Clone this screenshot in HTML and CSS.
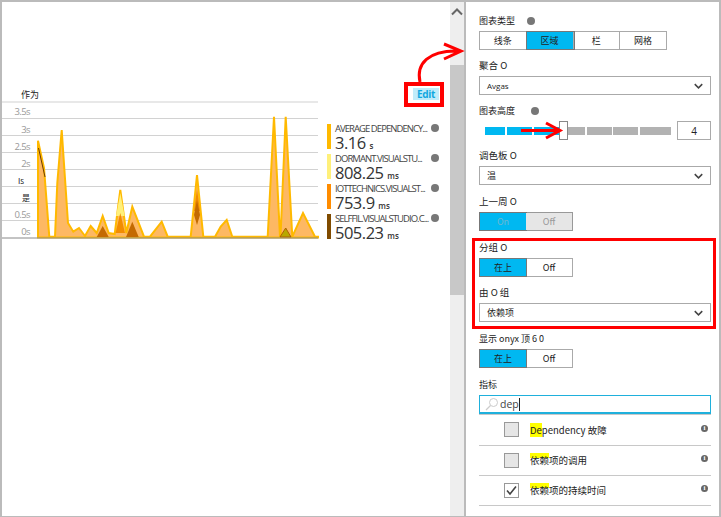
FILE: index.html
```html
<!DOCTYPE html>
<html lang="en">
<head>
	<meta charset="UTF-8">
	<title>Chart settings</title>
	<link rel="stylesheet" href="styles.css">
</head>
<body>
<div class="frame">
	<main class="left">
		<div class="chart-area">
			<div class="chart-head">
				<span class="chart-title">作为</span>
				<span class="edit">Edit</span>
			</div>
			<div class="chart-row">
				<svg class="chart" width="318" height="140" viewBox="0 0 318 140">
					<g class="grid">
						<path class="first" d="M0 1H316"/>
						<path d="M0 17.5H316M0 34.5H316M0 51.5H316M0 68.5H316M0 85.5H316M0 102.5H316M0 119.5H316"/>
					</g>
					<g class="ticks">
						<text x="28" y="14">3.5s</text>
						<text x="28" y="32">3s</text>
						<text x="28" y="49">2.5s</text>
						<text x="28" y="66">2s</text>
						<text class="odd" x="22" y="83">Is</text>
						<text class="odd" x="28" y="100">是</text>
						<text x="28" y="117">0.5s</text>
						<text x="28" y="134">0s</text>
					</g>
					<path class="main" d="M36 39.700L42 67L47.300 135.700H53L55.300 82L59.700 29L66 122L71.300 130.700L77 127L83 135L88.700 125L94.700 132L100.700 115L106.700 132L112.700 133L118.300 89L124.300 132L130.300 105.700L142 135.700H148L159.700 120.700L165.700 135.700H188.700L195 74L201.300 135.700H213L218.700 125.700L224.700 119L230.300 135.700H265.700L272 15.700L278 135.700H278.500L283.700 15.700L290.300 135.700L301 112L313 135.700H316V136.500H36Z"/>
					<path class="pale" d="M114 115L118.300 92L122.600 115Z"/>
					<path class="mid" d="M113.500 132L118.300 112L123 132Z"/>
					<path class="mid" d="M192 110L195 88L198 110Z"/>
					<path class="dark" d="M94.700 136L100.700 125L106.700 136Z"/>
					<path class="dark" d="M124 136L130.300 120.700L136.700 136Z"/>
					<path class="dark" d="M195 99L198 114L195 124L192 114Z"/>
					<path class="thin" d="M36.500 47L43 76"/>
					<path class="olive" d="M278 136L283.700 127L289 136Z"/>
					<path class="axis" d="M0 137H316"/>
				</svg>
				<ul class="legend">
					<li class="legend-item">
						<i class="swatch c1"></i>
						<div class="legend-text">
							<div class="legend-name"><span>AVERAGE DEPENDENCY...</span><i class="dot"></i></div>
							<div class="legend-value">3.16 <small>s</small></div>
						</div>
					</li>
					<li class="legend-item">
						<i class="swatch c2"></i>
						<div class="legend-text">
							<div class="legend-name"><span>DORMANT.VISUALSTU...</span><i class="dot"></i></div>
							<div class="legend-value">808.25 <small>ms</small></div>
						</div>
					</li>
					<li class="legend-item">
						<i class="swatch c3"></i>
						<div class="legend-text">
							<div class="legend-name"><span>IOTTECHNICS.VISUALST...</span><i class="dot"></i></div>
							<div class="legend-value">753.9 <small>ms</small></div>
						</div>
					</li>
					<li class="legend-item">
						<i class="swatch c4"></i>
						<div class="legend-text">
							<div class="legend-name"><span>SELFFIL.VISUALSTUDIO.C...</span><i class="dot"></i></div>
							<div class="legend-value">505.23 <small>ms</small></div>
						</div>
					</li>
				</ul>
			</div>
		</div>
		<div class="scrollbar">
			<svg class="scroll-up" width="12" height="10" viewBox="0 0 12 10"><path d="M1 7.500L6 2.500L11 7.500" fill="none" stroke="#666" stroke-width="2"/></svg>
			<div class="scroll-thumb"></div>
		</div>
	</main>

	<aside class="panel">
		<div class="label first-label type-label">图表类型 <i class="dot gap-dot"></i></div>
		<div class="seg">
			<span class="seg-cell">线条</span>
			<span class="seg-cell on">区域</span>
			<span class="seg-cell">栏</span>
			<span class="seg-cell">网格</span>
		</div>

		<div class="label">聚合 O</div>
		<div class="select small-text"><span>Avgas</span><svg class="chev" width="9" height="6" viewBox="0 0 12 7"><path d="M1 1L6 6L11 1"/></svg></div>

		<div class="label type-label">图表高度 <i class="dot gap-dot wide"></i></div>
		<div class="slider-row">
			<div class="slider">
				<i class="tick on w20"></i><i class="tick on w25 g2"></i><i class="tick on w25 g2"></i>
				<i class="thumb"></i>
				<i class="tick w17"></i><i class="tick w25 g2"></i><i class="tick w25 g1"></i><i class="tick w31 g2"></i>
			</div>
			<div class="num">4</div>
		</div>

		<div class="label">调色板 O</div>
		<div class="select"><span>温</span><svg class="chev" width="9" height="6" viewBox="0 0 12 7"><path d="M1 1L6 6L11 1"/></svg></div>

		<div class="label loose">上一周 O</div>
		<div class="toggle disabled">
			<span class="toggle-cell on">On</span>
			<span class="toggle-cell">Off</span>
		</div>

		<div class="label loose">分组 O</div>
		<div class="toggle">
			<span class="toggle-cell on">在上</span>
			<span class="toggle-cell">Off</span>
		</div>

		<div class="label">由 O 组</div>
		<div class="select"><span>依赖项</span><svg class="chev" width="9" height="6" viewBox="0 0 12 7"><path d="M1 1L6 6L11 1"/></svg></div>

		<div class="label loose type-label">显示 onyx 顶 6 0</div>
		<div class="toggle">
			<span class="toggle-cell on">在上</span>
			<span class="toggle-cell">Off</span>
		</div>

		<div class="label loose type-label">指标</div>
		<div class="search">
			<svg width="14" height="14" viewBox="0 0 14 14"><circle cx="8.500" cy="5.500" r="4" fill="none" stroke="#ccc"/><path d="M5.500 8.500L1 13" stroke="#ccc" stroke-width="1.200"/></svg>
			<span class="query">dep</span><i class="caret"></i>
		</div>
		<ul class="metric-list">
			<li class="metric">
				<i class="check"></i>
				<span class="metric-name"><mark>De</mark>pendency 故障</span>
				<i class="info">i</i>
			</li>
			<li class="metric">
				<i class="check"></i>
				<span class="metric-name"><mark class="strip">依赖</mark>项的调用</span>
				<i class="info">i</i>
			</li>
			<li class="metric">
				<i class="check checked"><svg width="13" height="11" viewBox="0 0 13 11"><path d="M2 5.500L5 9L11 1.500" fill="none" stroke="#444" stroke-width="1.600"/></svg></i>
				<span class="metric-name"><mark class="strip">依赖</mark>项的持续时间</span>
				<i class="info">i</i>
			</li>
		</ul>
	</aside>

	<!-- red notes drawn over the screenshot -->
	<div class="note note-edit"></div>
	<div class="note note-group"></div>
	<svg class="note-arrows" width="721" height="517" viewBox="0 0 721 517">
		<path d="M420 82C416 64 428 50 459 51M444 44L461 51L444 59" fill="none" stroke="#f00" stroke-width="3"/>
		<path d="M521 130.500H558" stroke="#f00" stroke-width="3"/>
		<path d="M546 123L560 130.500L546 138" fill="none" stroke="#f00" stroke-width="3"/>
	</svg>
</div>
</body>
</html>
```

FILE: styles.css
```css
* {
	box-sizing: border-box;
}

html, body {
	margin: 0;
	padding: 0;
}

body {
	width: 721px;
	height: 517px;
	overflow: hidden;
	background: white;
	color: #222;
	font-family: "Noto Sans CJK SC", "Noto Sans", sans-serif;
	font-size: 10px;
}

ul {
	list-style: none;
	margin: 0;
	padding: 0;
}

i {
	font-style: normal;
}

.frame {
	position: relative;
	display: flex;
	width: 721px;
	height: 517px;
	border: 2px solid #bbb;
	border-bottom-width: 1px;
}

/* left side */
.left {
	display: flex;
	width: 462px;
}

.chart-area {
	flex: 1;
	padding-top: 86px;
}

.chart-head {
	display: flex;
	justify-content: space-between;
	width: 437px;
	height: 13px;
	padding-left: 19px;
	line-height: 13px;
}

.chart-title {
	font-size: 9px;
	color: #222;
}

.edit {
	width: 26px;
	height: 12px;
	background: #c0ecfa;
	color: #10a8e0;
	font-family: "Open Sans", sans-serif;
	font-size: 10px;
	font-weight: 700;
	letter-spacing: -0.300px;
	line-height: 12px;
	text-align: center;
}

.chart-row {
	display: flex;
}

.chart {
	display: block;
	flex: none;
}

.grid path {
	fill: none;
	stroke: #d2d2d2;
	stroke-width: 1;
}

.grid .first {
	stroke: #e8e8e8;
	stroke-width: 2;
}

.ticks text {
	fill: #999;
	font-family: "Open Sans", sans-serif;
	font-size: 9.500px;
	letter-spacing: -0.600px;
	text-anchor: end;
}

.ticks .odd {
	fill: #222;
	font-family: "Noto Sans CJK SC", sans-serif;
	font-size: 8px;
	letter-spacing: 0;
}

.main {
	fill: #fdb863;
	stroke: #ffb900;
	stroke-width: 2;
	stroke-linejoin: miter;
}

.pale {
	fill: #fff07a;
}

.mid {
	fill: #f28c00;
}

.dark {
	fill: #c46a00;
}

.thin {
	fill: none;
	stroke: #6e3c00;
	stroke-width: 1;
}

.olive {
	fill: #b8a800;
	stroke: #b06000;
}

.axis {
	stroke: #888;
	stroke-width: 1;
}

.legend {
	display: flex;
	flex-direction: column;
	gap: 4px;
	margin-left: 7px;
	padding-top: 23px;
}

.legend-item {
	display: flex;
	height: 26px;
	gap: 4px;
}

.swatch {
	flex: none;
	width: 4px;
	height: 25px;
}

.c1 { background: #ffb900; }
.c2 { background: #fff07a; }
.c3 { background: #ff8c00; }
.c4 { background: #804b00; }

.legend-text {
	width: 104px;
}

.legend-name {
	display: flex;
	justify-content: space-between;
	height: 9px;
	color: #444;
	font-family: "Open Sans", sans-serif;
	font-size: 9.500px;
	letter-spacing: -0.950px;
	line-height: 9px;
	white-space: nowrap;
}

.legend-value {
	margin-top: 2px;
	color: #333;
	font-family: "Open Sans", sans-serif;
	font-size: 16.500px;
	font-weight: 500;
	letter-spacing: -0.500px;
	line-height: 15px;
	white-space: nowrap;
}

.legend-value small {
	font-size: 8px;
	font-weight: 600;
	letter-spacing: 0;
}

.dot {
	display: inline-block;
	flex: none;
	width: 8px;
	height: 8px;
	border-radius: 50%;
	background: #777;
}

.scrollbar {
	flex: none;
	width: 14px;
	margin-left: auto;
	background: #eee;
}

.scroll-up {
	display: block;
	margin: 5px 0 0 1px;
}

.scroll-thumb {
	height: 230px;
	margin-top: 48px;
	background: #c8c8c8;
}

/* settings panel */
.panel {
	flex: none;
	width: 255px;
	padding: 0 8px 0 13px;
	border-left: 2px solid #bbb;
}

.label {
	height: 15px;
	margin-top: 8px;
	font-size: 9.500px;
	line-height: 15px;
	white-space: nowrap;
}

.label.loose {
	margin-top: 9px;
}

.type-label {
	font-size: 9px;
}

.first-label {
	margin-top: 11px;
}

.gap-dot {
	margin-left: 10px;
	vertical-align: -1px;
}

.gap-dot.wide {
	margin-left: 14px;
}

.seg {
	display: flex;
	width: 188px;
	height: 19px;
	margin-top: 3px;
	border: 1px solid #aaa;
}

.seg-cell {
	flex: 1;
	border-right: 1px solid #aaa;
	font-size: 9px;
	line-height: 17px;
	text-align: center;
}

.seg-cell:last-child {
	border-right: 0;
}

.seg-cell.on {
	background: #00b8f1;
	outline: 1px solid #777;
}

.select {
	display: flex;
	align-items: center;
	justify-content: space-between;
	height: 19px;
	margin-top: 3px;
	padding: 0 7px 0 7px;
	border: 1px solid #aaa;
	font-size: 9px;
}

.small-text {
	font-family: "Open Sans", sans-serif;
	font-size: 8px;
}

.chev path {
	fill: none;
	stroke: #444;
	stroke-width: 2;
}

.slider-row {
	display: flex;
	align-items: center;
	justify-content: space-between;
	height: 19px;
	margin-top: 3px;
}

.slider {
	display: flex;
	align-items: center;
	padding-left: 6px;
}

.tick {
	display: block;
	height: 8px;
	background: #b2b2b2;
}

.tick.on { background: #00b8f1; }
.w17 { width: 17px; }
.w20 { width: 20px; }
.w25 { width: 25px; }
.w31 { width: 31px; }
.g1 { margin-left: 1px; }
.g2 { margin-left: 2px; }

.thumb {
	width: 9px;
	height: 19px;
	background: white;
	border: 1px solid #888;
}

.num {
	width: 34px;
	height: 19px;
	border: 1px solid #aaa;
	font-family: "Open Sans", sans-serif;
	font-size: 10px;
	line-height: 18px;
	text-align: center;
}

.toggle {
	display: flex;
	width: 94px;
	height: 19px;
	margin-top: 3px;
	border: 1px solid #aaa;
}

.toggle-cell {
	flex: 1;
	font-size: 9px;
	line-height: 17px;
	text-align: center;
}

.toggle-cell.on {
	background: #00b8f1;
	outline: 1px solid #777;
}

.disabled {
	border-color: #999;
	color: #999;
}

.disabled .toggle-cell {
	background: #e6e6e6;
}

.disabled .toggle-cell.on {
	background: #00b8f1;
	color: #6fb7d0;
}

.search {
	display: flex;
	align-items: center;
	height: 19px;
	margin-top: 3px;
	padding-left: 5px;
	border: 1px solid #1fb0dc;
	border-bottom-width: 2px;
	font-family: "Open Sans", sans-serif;
	font-size: 10.500px;
}

.query {
	margin-left: 1px;
	color: #444;
}

.caret {
	width: 1px;
	height: 13px;
	background: #222;
}

.metric {
	display: flex;
	align-items: center;
	height: 30.500px;
	padding-left: 25px;
	border-top: 1px solid #c8c8c8;
}

.metric:last-child {
	border-bottom: 1px solid #c8c8c8;
}

.check {
	display: flex;
	flex: none;
	align-items: center;
	justify-content: center;
	width: 15px;
	height: 15px;
	border: 1px solid #999;
	background: #e6e6e6;
}

.check.checked {
	background: white;
}

.metric-name {
	flex: 1;
	margin-left: 11px;
	font-size: 9.500px;
	white-space: nowrap;
}

mark {
	background: #ffff00;
	color: inherit;
}

mark.strip {
	background: linear-gradient(#ffff00 35%, transparent 35%);
}

.info {
	width: 7px;
	height: 7px;
	margin-right: 3px;
	margin-top: -3px;
	border-radius: 50%;
	background: #666;
	color: white;
	font-family: "Liberation Serif", serif;
	font-size: 7px;
	font-weight: 700;
	line-height: 7px;
	text-align: center;
}

/* annotations */
.note {
	position: absolute;
	border: 4px solid #f00;
}

.note-edit {
	left: 402px;
	top: 80px;
	width: 40px;
	height: 25px;
}

.note-group {
	left: 470px;
	top: 236px;
	width: 244px;
	height: 91px;
	border-width: 3px;
}

.note-arrows {
	position: absolute;
	left: -2px;
	top: -2px;
}
```
